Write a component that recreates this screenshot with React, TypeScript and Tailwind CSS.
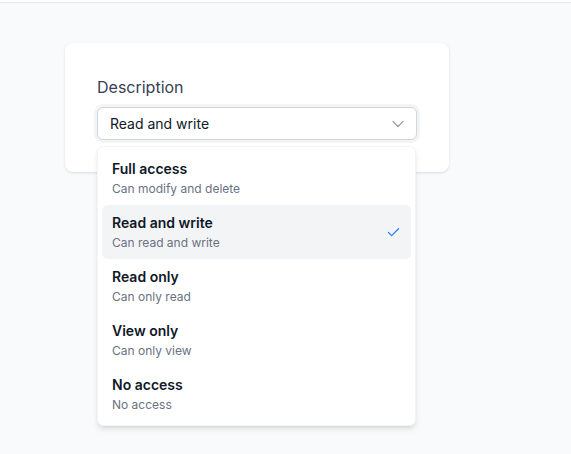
import { Check, ChevronDown } from "lucide-react";

const OPTIONS = [
  { title: "Full access", desc: "Can modify and delete" },
  { title: "Read and write", desc: "Can read and write" },
  { title: "Read only", desc: "Can only read" },
  { title: "View only", desc: "Can only view" },
  { title: "No access", desc: "No access" },
];

export default function App() {
  const selected = "Read and write";

  return (
    <div className="min-h-screen bg-[#f9fafb] font-['Inter',sans-serif]">
      <div className="h-[3px] border-b border-gray-200 bg-white" />
      <div className="pl-[65px] pt-[40px]">
        <div className="w-96 rounded-lg bg-white p-8 shadow-sm">
          <label className="mb-2 block text-base text-gray-700">Description</label>
          <div className="relative">
            <button className="flex h-[33px] w-full items-center justify-between rounded-md border border-gray-300 bg-white pl-3 pr-2 text-sm text-gray-900 ring-[3px] ring-gray-100">
              <span>{selected}</span>
              <ChevronDown className="h-5 w-5 text-gray-400" strokeWidth={1.5} />
            </button>
            <ul className="absolute left-0 right-[1px] top-[39px] z-10 rounded-md border border-gray-100 bg-white p-1 shadow-md">
              {OPTIONS.map((o) => {
                const active = o.title === selected;
                return (
                  <li
                    key={o.title}
                    className={`flex items-center justify-between rounded-md px-2.5 py-2 ${active ? "bg-gray-100" : ""}`}
                  >
                    <div>
                      <div className="text-sm font-semibold leading-5 text-gray-900">{o.title}</div>
                      <div className="mt-0.5 text-xs leading-4 text-gray-500">{o.desc}</div>
                    </div>
                    {active && <Check className="h-[15px] w-[15px] text-blue-500" strokeWidth={2} />}
                  </li>
                );
              })}
            </ul>
          </div>
        </div>
      </div>
    </div>
  );
}
